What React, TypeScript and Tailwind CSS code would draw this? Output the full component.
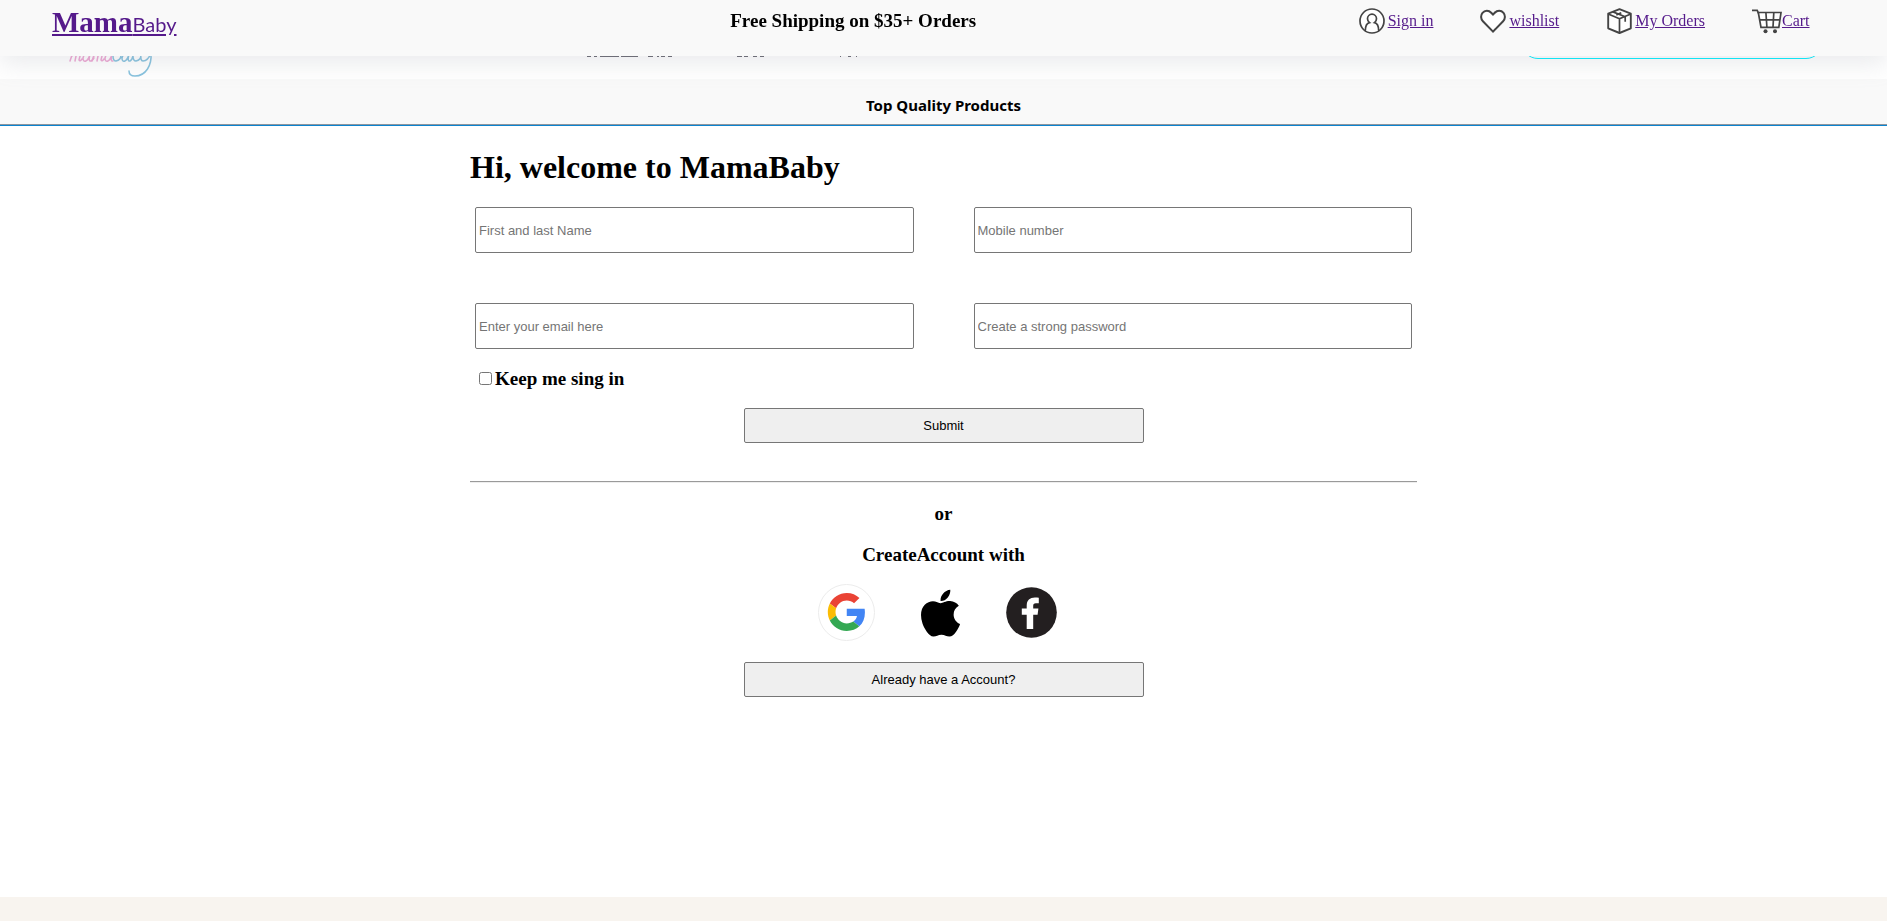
import type { ReactNode } from "react";

const serif = "font-['Liberation_Serif','Times_New_Roman',serif]";
const sans = "font-['Liberation_Sans',Arial,sans-serif]";

function UserIcon() {
  return (
    <svg className="mr-[3px]" width="26" height="26" viewBox="0 0 26 26" fill="#fff" stroke="#444" strokeWidth="1.7" aria-hidden="true">
      <circle cx="13" cy="13" r="12" />
      <path d="M6.300 23c0-4.800 1.200-7.800 4.200-8.400-1.300-1-2-2.200-2-3.900a4.500 4.500 0 0 1 9 0c0 1.700-.7 2.900-2 3.900 3 .6 4.200 3.600 4.200 8.400" />
    </svg>
  );
}

function HeartIcon() {
  return (
    <svg className="mr-[3px]" width="26" height="26" viewBox="0 0 26 26" fill="#fff" stroke="#444" strokeWidth="2" aria-hidden="true">
      <path d="M13 23.600 2.900 13.300C.7 11 .5 7.300 2.500 4.900c2.300-2.700 6.300-2.700 8.700-.2L13 6.500l1.800-1.800c2.400-2.500 6.400-2.500 8.700.2 2 2.400 1.800 6.100-.4 8.400z" />
    </svg>
  );
}

function BoxIcon() {
  return (
    <svg className="mr-[3px]" width="26" height="26" viewBox="0 0 26 26" fill="#fff" stroke="#444" strokeWidth="1.900" strokeLinejoin="round" aria-hidden="true">
      <path d="M13.500 1.200 24.800 5.700v14.600L13.500 25 2.200 20.300V5.700z" />
      <path d="M2.200 6 13.500 10.800 24.800 6M13.500 10.800V25M7 3.900l12.200 4.900v5M10.300 6.900l5-2.200" fill="none" strokeWidth="1.700" />
    </svg>
  );
}

function CartIcon() {
  return (
    <svg width="30" height="26" viewBox="0 0 30 26" fill="none" stroke="#444" strokeWidth="1.700" aria-hidden="true">
      <path d="M6.300 4.500H29l-2.200 14.800H9z" fill="#fff" />
      <path d="M0 2.300h5.200l1.400 3M7.800 11.900h20M13.900 4.500l1 14.800M21.800 4.500l-.8 14.800" />
      <circle cx="13.500" cy="23.200" r="2" fill="#444" stroke="none" />
      <circle cx="23" cy="23.200" r="2" fill="#444" stroke="none" />
    </svg>
  );
}

function GoogleIcon() {
  return (
    <svg width="57" height="57" viewBox="0 0 57 57" aria-hidden="true">
      <circle cx="28.500" cy="28.500" r="28" fill="#fff" stroke="#ececec" />
      <g transform="translate(9.800 9) scale(.79)">
        <path fill="#EA4335" d="M24 9.500c3.540 0 6.710 1.220 9.210 3.600l6.850-6.850C35.900 2.380 30.470 0 24 0 14.620 0 6.510 5.380 2.560 13.220l7.980 6.190C12.430 13.720 17.740 9.500 24 9.500z" />
        <path fill="#4285F4" d="M46.980 24.550c0-1.570-.15-3.090-.38-4.550H24v9.020h12.940c-.58 2.960-2.260 5.480-4.780 7.180l7.730 6c4.510-4.180 7.090-10.360 7.090-17.650z" />
        <path fill="#FBBC05" d="M10.530 28.590c-.48-1.450-.76-2.990-.76-4.590s.27-3.140.76-4.590l-7.980-6.190C.92 16.460 0 20.120 0 24c0 3.880.92 7.540 2.560 10.780z" />
        <path fill="#34A853" d="M24 48c6.480 0 11.930-2.130 15.890-5.810l-7.730-6c-2.150 1.450-4.920 2.300-8.160 2.300-6.260 0-11.570-4.220-13.470-9.910l-7.980 6.190C6.510 42.620 14.620 48 24 48z" />
      </g>
    </svg>
  );
}

function AppleIcon() {
  return (
    <svg width="39" height="48" viewBox="0 0 376 460" preserveAspectRatio="none" aria-hidden="true">
      <path d="M314.700 244.700c-.2-36.700 16.400-64.400 50-84.800-18.800-26.900-47.200-41.700-84.700-44.600-35.500-2.800-74.300 20.700-88.500 20.700-15 0-49.400-19.700-76.400-19.700C59.300 117.200 0 160.800 0 249.500q0 39.300 14.400 81.200c12.800 36.700 59 126.700 107.200 125.200 25.200-.6 43-17.900 75.800-17.900 31.800 0 48.300 17.900 76.400 17.900 48.600-.7 90.400-82.500 102.600-119.300-65.200-30.700-61.700-90-61.700-91.900zM258.100 80.500c27.300-32.400 24.800-61.900 24-72.500-24.100 1.400-52 16.400-67.900 34.900-17.500 19.800-27.800 44.300-25.600 71.900 26.100 2 49.900-11.400 69.500-34.300z" />
    </svg>
  );
}

function FacebookIcon() {
  return (
    <svg width="51" height="51" viewBox="0 0 51 51" aria-hidden="true">
      <circle cx="25.500" cy="25.500" r="25.300" fill="#231f20" />
      <path fill="#fff" d="M20.700 42V27.800h-4.900v-6.200h4.900v-2.900c0-5.500 3.200-8.200 8.200-8.200 1.500 0 2.800.1 3.900.2v5.500h-2.900c-2.100 0-2.700 1-2.700 2.700v2.700h5.200l-.8 6.200h-4.400V42z" />
    </svg>
  );
}

function NavLink({ icon, children }: { icon: ReactNode; children: ReactNode }) {
  return (
    <a href="#" className="flex shrink-0 items-center whitespace-nowrap text-base leading-6 text-[#551a8b] underline">
      {icon}
      {children}
    </a>
  );
}

function Field({ label, type }: { label: string; type: string }) {
  return (
    <input
      type={type}
      aria-label={label}
      placeholder={label}
      className={`${sans} h-[46px] w-full min-w-0 rounded-xs border border-[#767676] bg-white px-[3px] text-[13px] placeholder:text-[#757575]`}
    />
  );
}

function WideButton({ type, children }: { type: "submit" | "button"; children: ReactNode }) {
  return (
    <button
      type={type}
      className={`${sans} mx-auto block h-[35px] w-full max-w-[400px] rounded-xs border border-[#767676] bg-[#efefef] text-[13px] text-black`}
    >
      {children}
    </button>
  );
}

export default function App() {
  return (
    <div className={`${serif} flex min-h-screen flex-col bg-white text-black`}>
      <header className="fixed inset-x-0 top-0 z-10 grid h-14 grid-cols-[387fr_333fr_280fr] items-start bg-[#f9f9f9] pt-2 shadow-[0_8px_24px_rgba(149,157,165,0.2)]">
        <a href="#" className="justify-self-start whitespace-nowrap pl-[52px] text-[29px] leading-7 font-bold text-[#551a8b] underline">
          Mama
          <span className="font-['Comic_Sans_MS','Lato',cursive] text-xl leading-7 font-normal">Baby</span>
        </a>
        <p className="text-[19px] leading-[26px] font-bold whitespace-nowrap">Free Shipping on $35+ Orders</p>
        <nav className="flex gap-[47px]">
          <NavLink icon={<UserIcon />}>Sign in</NavLink>
          <NavLink icon={<HeartIcon />}>wishlist</NavLink>
          <NavLink icon={<BoxIcon />}>My Orders</NavLink>
          <NavLink icon={<CartIcon />}>Cart</NavLink>
        </nav>
      </header>

      <div className="flex h-[79px] items-start pr-16 pl-[68px]">
        <svg className="mt-10 shrink-0" width="88" height="38" viewBox="0 0 88 38" fill="none" strokeWidth="1.500" strokeLinecap="round" role="img" aria-label="mamababy">
          <g stroke="#eda6d3">
            <path d="M2 21l3-9M4 16q5-6 4 0l-1 5M8 16q5-6 4 0l-1 4q1 2 3-1M21 13q-5 0-6 5 0 4 3 3 3-2 4-7-2 8 1 7 2-1 3-3" />
            <path transform="translate(22)" d="M2 21l3-9M4 16q5-6 4 0l-1 5M8 16q5-6 4 0l-1 4q1 2 3-1M21 13q-5 0-6 5 0 4 3 3 3-2 4-7-2 8 1 7" />
          </g>
          <path
            stroke="#86c2de"
            d="M49 5l-4 11q0 5 3 5 5-1 5-6 0-3-4-1M60 13q-5 0-6 5 0 4 3 3 3-2 4-7-2 8 1 7 2-1 3-5l3-11-3 11q0 5 3 5 5-1 5-6 0-3-4-1M73 13q-1 8 2 8 5 0 8-8c1 12-5 23-16 23q-6 0-6-5"
          />
        </svg>
        <svg className="mt-14 ml-[428px] shrink-0" width="280" height="1" viewBox="0 0 280 1" stroke="#666670" aria-hidden="true">
          <path d="M3 .5h4M10 .5h3M16 .5h19M37 .5h17M64 .5h5M73 .5h2M77 .5h4M84 .5h4M153 .5h5M160 .5h4M169 .5h4M176 .5h4M256 .5h1M264 .5h3M272 .5h1" />
        </svg>
        <input type="search" aria-label="Search" className="mt-4 ml-auto h-[43px] w-[302px] rounded-[17px] border border-[#00f0ff] bg-transparent px-4" />
      </div>

      <div className="border-b border-[#8c969f] bg-[#f9f9f9]">
        <h2 className="pt-3 pb-[5px] text-center font-['Noto_Sans','Segoe_UI',sans-serif] text-[15px] leading-7 font-bold">
          Top Quality Products
        </h2>
      </div>
      <div className="border-t border-[#0b84d0]" />

      <main className="mx-auto w-full max-w-[947px] flex-1 pt-[19px]">
        <h1 className="text-[32px] leading-[45px] font-bold">Hi, welcome to MamaBaby</h1>
        <form className="pt-[17px]" onSubmit={(e) => e.preventDefault()}>
          <div className="grid grid-cols-2 gap-x-[60px] gap-y-[50px] px-[5px]">
            <Field label="First and last Name" type="text" />
            <Field label="Mobile number" type="tel" />
            <Field label="Enter your email here" type="email" />
            <Field label="Create a strong password" type="password" />
          </div>
          <label className="mt-4 mb-4 flex w-fit items-center gap-[3px] pl-[9px] text-[19px] leading-[27px] font-bold">
            <input type="checkbox" className="size-[13px]" />
            Keep me sing in
          </label>
          <WideButton type="submit">Submit</WideButton>
        </form>
        <hr className="mt-[38px] h-0.5 border-t border-b border-t-[#9a9a9a] border-b-[#eeeeee]" />
        <p className="mt-5 text-center text-[19px] leading-[21px] font-bold">or</p>
        <p className="mt-5 text-center text-[19px] leading-[21px] font-bold">CreateAccount with</p>
        <div className="mt-[19px] mb-[21px] flex items-center justify-center gap-[46px] pr-3">
          <a href="#" aria-label="Google"><GoogleIcon /></a>
          <a href="#" aria-label="Apple"><AppleIcon /></a>
          <a href="#" aria-label="Facebook"><FacebookIcon /></a>
        </div>
        <WideButton type="button">Already have a Account?</WideButton>
      </main>

      <footer className="h-6 bg-[#f8f4ef]" />
    </div>
  );
}
